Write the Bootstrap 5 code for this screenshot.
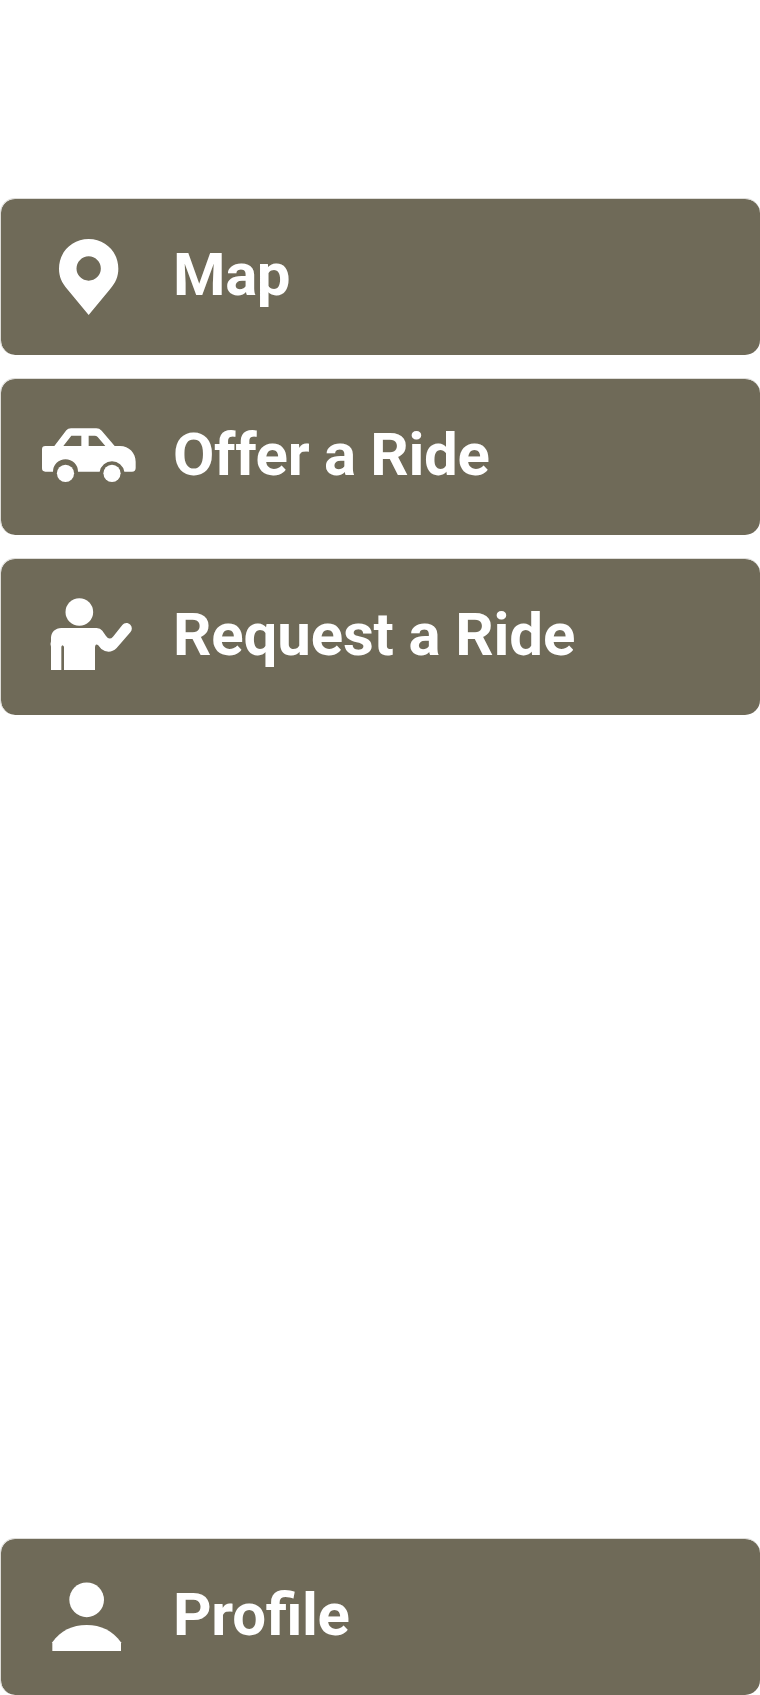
<!DOCTYPE html>
<html lang="en">
<head>
<meta charset="utf-8">
<meta name="viewport" content="width=device-width, initial-scale=1">
<title>Ride menu</title>
<link href="https://cdn.jsdelivr.net/npm/bootstrap@5.3.0/dist/css/bootstrap.min.css" rel="stylesheet">
<style>
  body { background: #fff; }
  .ride-menu { height: 1695px; padding-top: 198px; gap: 23px; }
  .menu-tile {
    height: 157px;
    background: #6f6a58 padding-box;
    border: 0 solid #dddcd8;
    border-width: 1px 0 0 1px;
    border-radius: 15px;
    color: #fff;
    font: 700 60px/70px Roboto, "Liberation Sans", sans-serif;
  }
  .menu-tile:hover { color: #fff; }
  .menu-tile svg { width: 172px; height: 156px; fill: #fff; }
  .tile-label { padding-top: 41px; letter-spacing: -.15px; }
  .label-map { letter-spacing: -.4px; }
  .label-offer { letter-spacing: -.33px; }
  .label-profile { letter-spacing: -.3px; font-feature-settings: "liga" 1; }
</style>
</head>
<body>
<nav class="ride-menu d-flex flex-column">
  <a href="#" class="menu-tile d-flex text-decoration-none overflow-hidden">
    <svg class="flex-shrink-0" viewBox="3 27 516 468" aria-hidden="true">
      <path fill-rule="evenodd" d="M266 147C216 147 177 186 177 236C177 260 185 277 202 298L266 375L330 298C347 277 355 260 355 236C355 186 316 147 266 147ZM266 199A36.500 36.500 0 1 1 266 272A36.500 36.500 0 1 1 266 199Z"/>
    </svg>
    <span class="tile-label label-map">Map</span>
  </a>
  <a href="#" class="menu-tile d-flex text-decoration-none overflow-hidden">
    <svg class="flex-shrink-0" viewBox="3 27 516 468" aria-hidden="true">
      <path fill-rule="evenodd" d="M136 228H163L199 181Q204 175 213 175H289Q298 175 305 182L344 228H360C387 228 407 249 407 275V294Q407 305 396 305H373A37.500 37.500 0 0 0 299 305H234A37.500 37.500 0 0 0 159 305H136Q126 305 126 295V238Q126 228 136 228ZM190 228H244V197H214ZM266 197V228H316L293 201Q289 197 284 197Z"/>
      <circle cx="196.500" cy="310" r="25.800"/>
      <circle cx="336" cy="310" r="25.800"/>
    </svg>
    <span class="tile-label label-offer">Offer a Ride</span>
  </a>
  <a href="#" class="menu-tile d-flex text-decoration-none overflow-hidden">
    <svg class="flex-shrink-0" viewBox="3 27 516 468" aria-hidden="true">
      <circle cx="238" cy="186" r="41.500"/>
      <path d="M153 360V290Q150 282 153 274V264C153 247 166 234 184 234H290Q301 234 307 242L318 258Q328 272 339 260L367 225C373 217 384 217 391 224C397 231 397 240 391 247L350 294Q328 315 304 297L294 285Q285 279 285 294V360H192V290Q187 281 184 290V360Z"/>
    </svg>
    <span class="tile-label">Request a Ride</span>
  </a>
  <a href="#" class="menu-tile mt-auto d-flex text-decoration-none overflow-hidden">
    <svg class="flex-shrink-0" viewBox="3 27 516 468" aria-hidden="true">
      <circle cx="260" cy="209.500" r="52"/>
      <path d="M157 363V337C181 302 217 285 260 285S338 302 363 337V363Z"/>
    </svg>
    <span class="tile-label label-profile">Profile</span>
  </a>
</nav>
<script src="https://cdn.jsdelivr.net/npm/bootstrap@5.3.0/dist/js/bootstrap.bundle.min.js"></script>
</body>
</html>
